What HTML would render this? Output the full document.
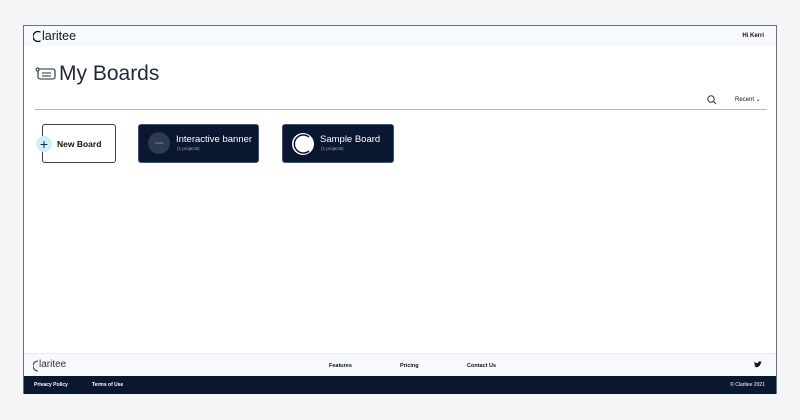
<!DOCTYPE html>
<html><head><style>
*{margin:0;padding:0;box-sizing:border-box}
body{width:800px;height:420px;background:#f4f5f7;font-family:"Liberation Sans",sans-serif;position:relative;overflow:hidden}
.win{position:absolute;left:23px;top:25px;width:754px;height:369px;background:#fff;border:1px solid #6b7280}
.hdr{position:absolute;left:0;top:0;width:752px;height:21px;background:#f6fafd}
.logo{position:absolute;left:18px;top:3px;font-size:12.5px;color:#111827}
.hi{position:absolute;right:12px;top:7px;font-size:6px;font-weight:bold;color:#111}
h1{position:absolute;left:35px;top:36px;font-size:21px;font-weight:normal;color:#1f2937}
.line{position:absolute;left:11px;top:83px;width:732px;height:1px;background:#b5b8bd}
.card{position:absolute;top:98px;height:39px;border-radius:3px}
.dark{background:#0a1730;border:1px solid #3b5575;color:#fff}
.t{position:absolute;font-size:9.5px}
.s{position:absolute;font-size:4.5px;color:#aab}
.fl{position:absolute;left:0;top:327px;width:752px;height:23px;background:#f6fafd;border-top:1px solid #e4eef5}
.fd{position:absolute;left:0;top:350px;width:752px;height:18px;background:#0a1730;color:#fff;font-size:5px;font-weight:bold}
.fn{position:absolute;top:9px;font-size:5.5px;font-weight:bold;color:#111}
</style></head><body>
<div class="win">
<div class="hdr"><div class="logo">laritee</div>
<svg style="position:absolute;left:9px;top:4px" width="9" height="13"><path d="M7.5 2.2A5 5 0 1 0 7.5 10.8" fill="none" stroke="#111" stroke-width="1.3"/></svg>
<div class="hi">Hi Kerri</div></div>
<svg style="position:absolute;left:11px;top:41px" width="22" height="14"><rect x="3" y="2" width="17" height="10" rx="2" fill="none" stroke="#1f2937" stroke-width="1.1"/><circle cx="2.5" cy="2.5" r="1.5" fill="#fff" stroke="#1f2937" stroke-width="0.9"/><path d="M7 6h9M7 9h9" stroke="#1f2937" stroke-width="1"/></svg>
<h1>My Boards</h1>
<svg style="position:absolute;left:683px;top:69px" width="10" height="10"><circle cx="4" cy="4" r="3.2" fill="none" stroke="#333" stroke-width="1"/><path d="M6.5 6.5L9 9" stroke="#333" stroke-width="1"/></svg>
<div style="position:absolute;left:711px;top:70px;font-size:6px;color:#111">Recent ⌄</div>
<div class="line"></div>
<div class="card" style="left:18px;width:74px;border:1px solid #374151;background:#fff"></div>
<div style="position:absolute;left:12px;top:110px;width:16px;height:16px;border-radius:50%;background:#cdeefa;text-align:center;font-size:14px;line-height:16px;color:#1f2937">+</div>
<div style="position:absolute;left:33px;top:113px;font-size:8.5px;font-weight:bold;color:#111">New Board</div>
<div class="card dark" style="left:114px;width:121px">
<div style="position:absolute;left:9px;top:7px;width:22px;height:22px;border-radius:50%;background:#2d3a50;color:#9aa;font-size:3px;text-align:center;line-height:22px">LOGO</div>
<div class="t" style="left:37px;top:9px">Interactive banner</div><div class="s" style="left:38px;top:21px">(1 projects)</div></div>
<div class="card dark" style="left:258px;width:112px">
<svg style="position:absolute;left:8px;top:7px" width="24" height="24"><circle cx="12" cy="12" r="11" fill="#fff"/><path d="M18 5A9 9 0 1 0 18 19" fill="none" stroke="#0a1730" stroke-width="1.5"/></svg>
<div class="t" style="left:37px;top:9px">Sample Board</div><div class="s" style="left:38px;top:21px">(1 projects)</div></div>
<div class="fl">
<svg style="position:absolute;left:9px;top:6px" width="6" height="12"><path d="M5 1A5 5 0 0 0 5 11" fill="none" stroke="#333" stroke-width="1"/></svg>
<div style="position:absolute;left:15px;top:5px;font-size:10px;color:#333">laritee</div>
<div class="fn" style="left:305px">Features</div><div class="fn" style="left:376px">Pricing</div><div class="fn" style="left:443px">Contact Us</div>
<svg style="position:absolute;left:730px;top:7px" width="8" height="7"><path d="M0 5.5c2 1.5 6 1 7-4l1-1-1 .3C6 0 4 0 4 2.3 2.5 2.3 1 1.5 .5 .5 0 2 1 3.5 1.5 3.6c-.5 0-1-.2-1-.2 0 1 1 1.8 1.8 2C1.5 5.5.7 5.6 0 5.5z" fill="#111"/></svg></div>
<div class="fd"><span style="position:absolute;left:10px;top:6px">Privacy Policy</span><span style="position:absolute;left:68px;top:6px">Terms of Use</span><span style="position:absolute;right:11px;top:6px;font-weight:normal">© Claritee 2021</span></div>
</div>
</body></html>
